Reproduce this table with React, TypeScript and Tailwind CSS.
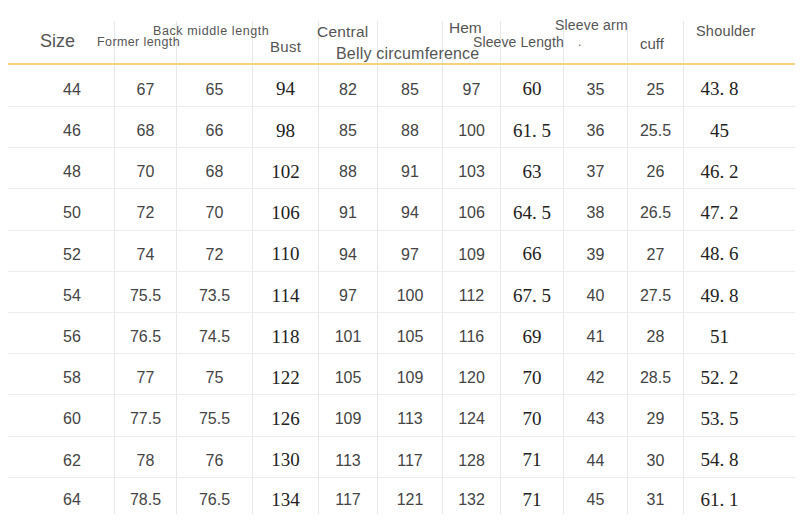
const cols = "grid grid-cols-[106px_62px_76px_66px_59px_65px_58px_63px_64px_56px_112px]"

const rows: string[][] = [
  ["44", "67", "65", "94", "82", "85", "97", "60", "35", "25", "43. 8"],
  ["46", "68", "66", "98", "85", "88", "100", "61. 5", "36", "25.5", "45"],
  ["48", "70", "68", "102", "88", "91", "103", "63", "37", "26", "46. 2"],
  ["50", "72", "70", "106", "91", "94", "106", "64. 5", "38", "26.5", "47. 2"],
  ["52", "74", "72", "110", "94", "97", "109", "66", "39", "27", "48. 6"],
  ["54", "75.5", "73.5", "114", "97", "100", "112", "67. 5", "40", "27.5", "49. 8"],
  ["56", "76.5", "74.5", "118", "101", "105", "116", "69", "41", "28", "51"],
  ["58", "77", "75", "122", "105", "109", "120", "70", "42", "28.5", "52. 2"],
  ["60", "77.5", "75.5", "126", "109", "113", "124", "70", "43", "29", "53. 5"],
  ["62", "78", "76", "130", "113", "117", "128", "71", "44", "30", "54. 8"],
  ["64", "78.5", "76.5", "134", "117", "121", "132", "71", "45", "31", "61. 1"],
]

// bust, sleeve length and shoulder are typed in a serif face in the chart
const serifCols = [3, 7, 10]

function Cell({ value, i }: { value: string, i: number }) {
    const serif = serifCols.includes(i)
    return (
        <div
            className={[
                "flex items-center justify-center whitespace-pre pt-[8px]",
                i > 0 ? "border-l border-[#e8e8e8]" : "pl-[22px]",
                i === 10 ? "pr-[40px]" : "",
                serif
                    ? "font-['Liberation_Serif',serif] text-[19px] text-[#222]"
                    : "font-['Liberation_Sans',sans-serif] text-[16px] text-[#444]",
            ].join(" ")}>
            {value}
        </div>
    )
}

export default function App() {
    return (
        <div className="w-[800px] h-[530px] bg-white overflow-hidden">
            <div className="ml-[8px] w-[787px]">
                {/* header labels float over the column lines, like in the source chart */}
                <div className={`${cols} relative h-[65px] border-b-2 border-[#f3d27a] text-[#555] font-['Liberation_Sans',sans-serif] leading-none`}>
                    {Array.from({ length: 11 }).map((_, i) => (
                        <div key={i} className={i > 0 ? "mt-[21px] border-l border-[#e8e8e8]" : ""} />
                    ))}
                    <span className="absolute left-[32px] top-[32px] text-[18px]">Size</span>
                    <span className="absolute left-[89px] top-[36px] text-[12.5px] tracking-[0.4px] whitespace-nowrap">Former length</span>
                    <span className="absolute left-[145px] top-[25px] text-[12.5px] tracking-[0.6px] whitespace-nowrap">Back middle length</span>
                    <span className="absolute left-[262px] top-[39px] text-[15px] tracking-[0.3px]">Bust</span>
                    <span className="absolute left-[309px] top-[24px] text-[15.5px] tracking-[0.2px]">Central</span>
                    <span className="absolute left-[328px] top-[46px] text-[16px] tracking-[0.2px] whitespace-nowrap">Belly circumference</span>
                    <span className="absolute left-[441px] top-[20px] text-[15.5px]">Hem</span>
                    <span className="absolute left-[465px] top-[35px] text-[14px] tracking-[0.1px] whitespace-nowrap">Sleeve Length</span>
                    <span className="absolute left-[570px] top-[36px] text-[12px]">.</span>
                    <span className="absolute left-[547px] top-[18px] text-[14px] tracking-[0.2px] whitespace-nowrap">Sleeve arm</span>
                    <span className="absolute left-[632px] top-[36px] text-[15px]">cuff</span>
                    <span className="absolute left-[688px] top-[24px] text-[14.5px] tracking-[0.2px]">Shoulder</span>
                </div>
                {rows.map((row, r) => (
                    <div
                        key={r}
                        className={`${cols} ${r === rows.length - 1 ? "h-[32px]" : r === 0 ? "h-[42px] border-b border-[#ececec]" : "h-[41.2px] border-b border-[#ececec]"}`}>
                        {row.map((v, i) => (
                            <Cell key={i} value={v} i={i} />
                        ))}
                    </div>
                ))}
            </div>
        </div>
    )
}
